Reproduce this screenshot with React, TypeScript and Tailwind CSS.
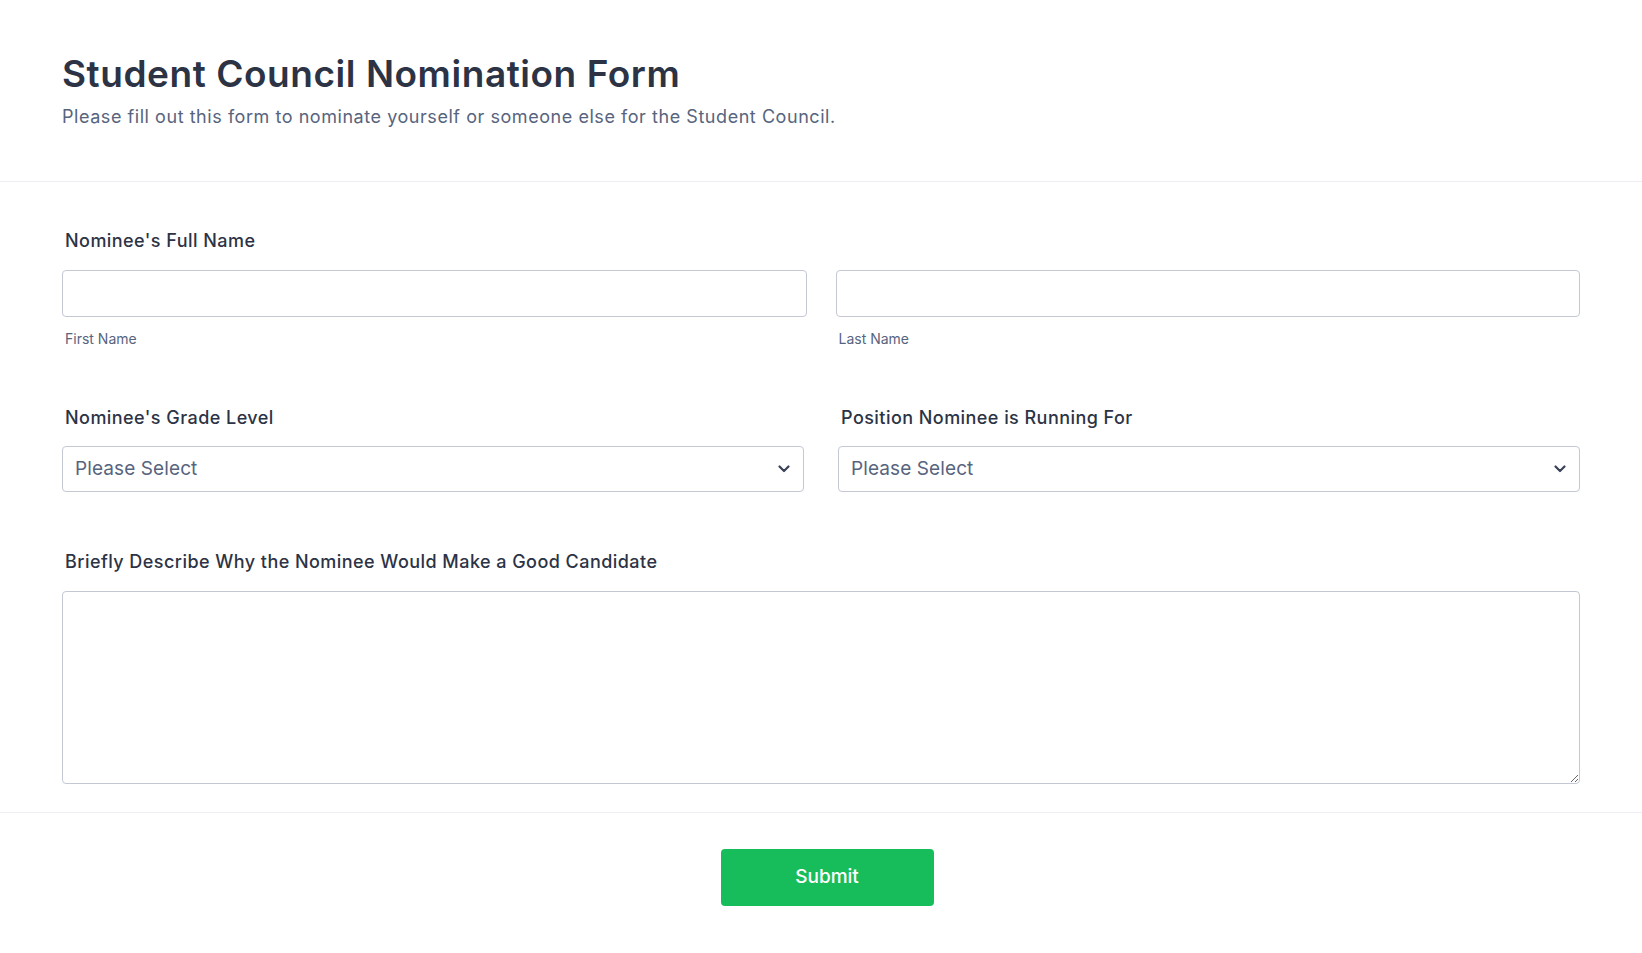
import React from "react";

function Chevron() {
  return (
    <svg width="12" height="8" viewBox="0 0 12 8" fill="none" className="shrink-0">
      <path d="M1.5 1.5 L6 6 L10.5 1.5" stroke="#3b4257" strokeWidth="2.2" strokeLinecap="round" strokeLinejoin="round" />
    </svg>
  );
}

function SelectBox() {
  return (
    <div className="flex h-[46px] items-center justify-between rounded-[4px] border border-[#c3c8d4] bg-white pl-[12px] pr-[13px]">
      <span className="text-[19px] tracking-[0.1px] text-[#57647e]">Please Select</span>
      <Chevron />
    </div>
  );
}

const labelCls = "pl-[3px] text-[18px] font-medium leading-[24px] tracking-[0.45px] text-[#2c3345]";
const subCls = "mt-[13px] pl-[3px] text-[14px] leading-[18px] text-[#57647e]";
const inputCls = "block h-[47px] w-full rounded-[4px] border border-[#c3c8d4] bg-white outline-none";

export default function App() {
  return (
    <div className="min-h-[953px] w-full bg-white font-['Inter','Liberation_Sans',sans-serif] text-[#2c3345]">
      <header className="border-b border-[#eceef3] px-[62px] pb-[50px] pt-[52px]">
        <h1 className="text-[37px] font-semibold leading-[44px] tracking-[0.55px] text-[#2c3345]">
          Student Council Nomination Form
        </h1>
        <p className="mt-[7px] text-[18px] leading-[28px] tracking-[0.55px] text-[#57647e]">
          Please fill out this form to nominate yourself or someone else for the Student Council.
        </p>
      </header>

      <main className="border-b border-[#eceef3] px-[62px] pb-[28px] pt-[47px]">
        <section>
          <div className={labelCls}>Nominee's Full Name</div>
          <div className="mt-[17px] grid grid-cols-2 gap-[29px]">
            <div>
              <input className={inputCls} />
              <div className={subCls}>First Name</div>
            </div>
            <div>
              <input className={inputCls} />
              <div className={subCls}>Last Name</div>
            </div>
          </div>
        </section>

        <section className="mt-[58px] grid grid-cols-2 gap-[34px]">
          <div>
            <div className={labelCls}>Nominee's Grade Level</div>
            <div className="mt-[16px]">
              <SelectBox />
            </div>
          </div>
          <div>
            <div className={labelCls}>Position Nominee is Running For</div>
            <div className="mt-[16px]">
              <SelectBox />
            </div>
          </div>
        </section>

        <section className="mt-[58px]">
          <div className={labelCls}>Briefly Describe Why the Nominee Would Make a Good Candidate</div>
          <textarea className="mt-[17px] block h-[193px] w-full rounded-[4px] border border-[#c3c8d4] bg-white outline-none" />
        </section>
      </main>

      <footer className="flex justify-center pb-[48px] pl-[12px] pt-[36px]">
        <button className="h-[57px] w-[213px] rounded-[4px] bg-[#18bd5b] text-[19px] font-medium text-white">
          Submit
        </button>
      </footer>
    </div>
  );
}
